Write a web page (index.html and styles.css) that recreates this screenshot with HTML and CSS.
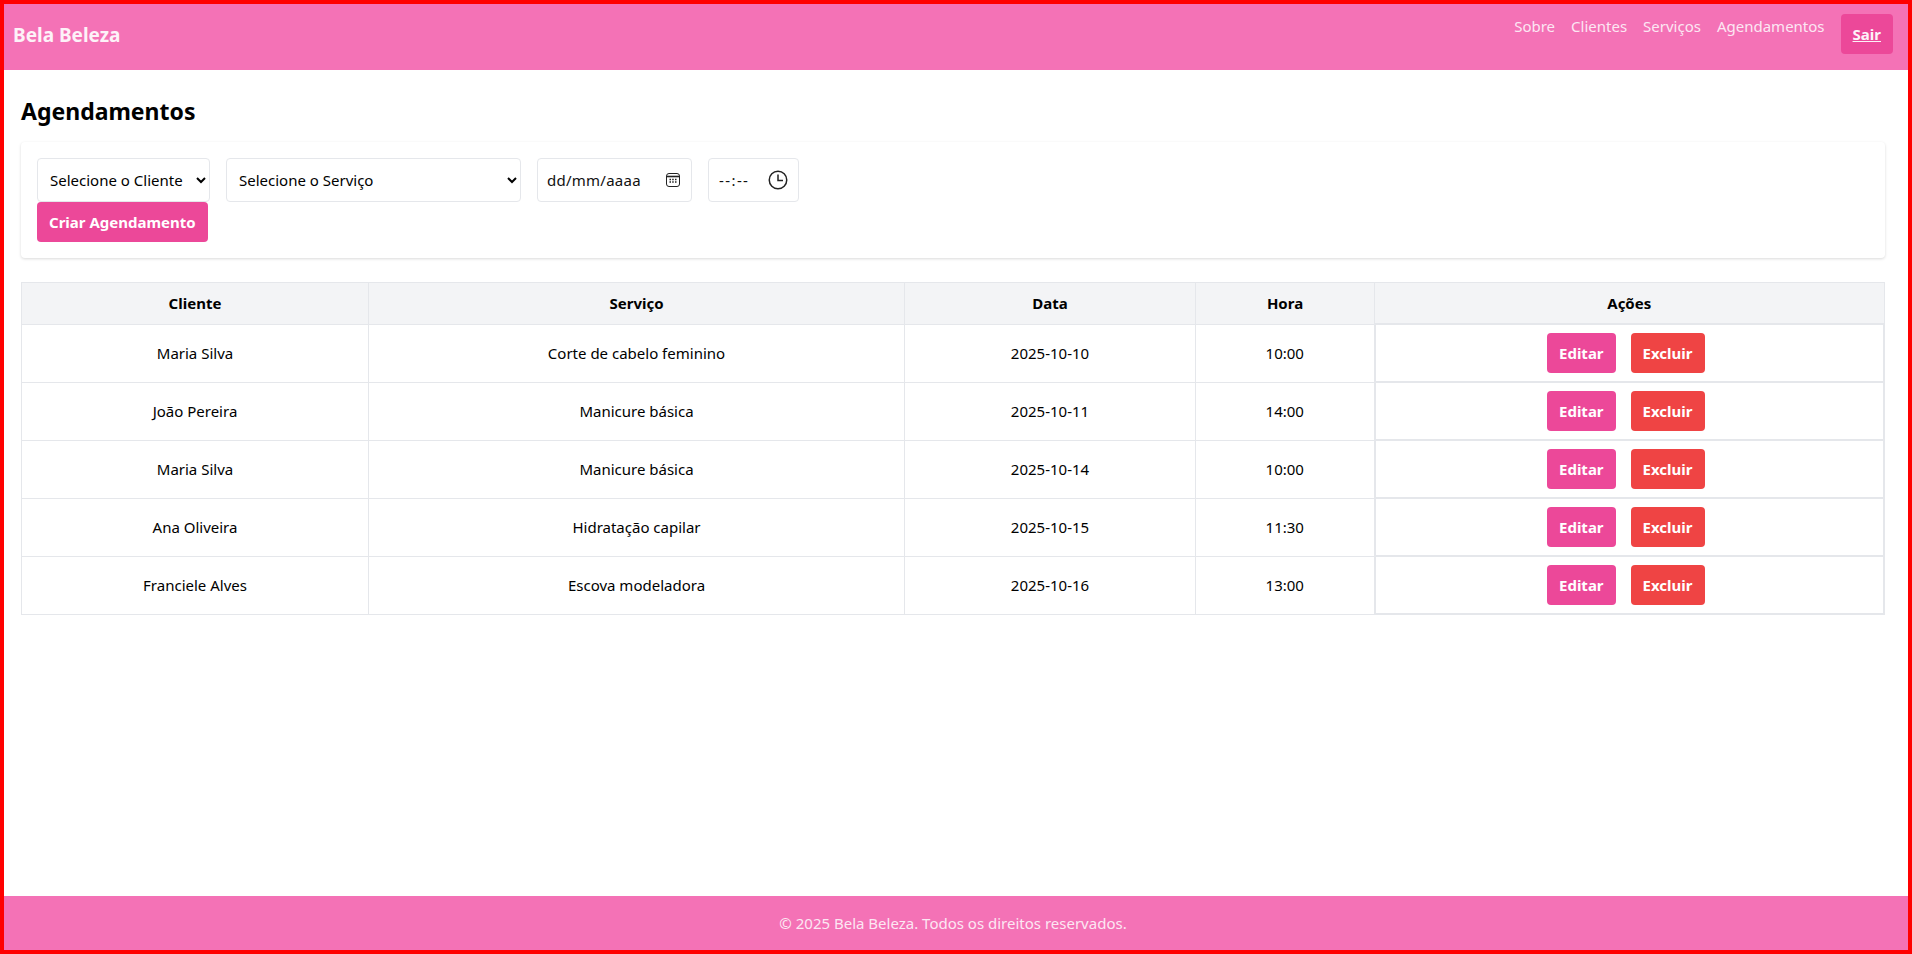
FILE: index.html
```html
<!DOCTYPE html>
<html lang="pt-BR">
<head>
  <meta charset="UTF-8" />
  <meta name="viewport" content="width=device-width, initial-scale=1.0"/>
  <title>Agendamentos - Bela Beleza</title>
  <link rel="stylesheet" href="styles.css">
</head>
<body>
  <header>
    <div class="brand">Bela Beleza</div>
    <nav>
      <a href="#">Sobre</a>
      <a href="#">Clientes</a>
      <a href="#">Serviços</a>
      <a href="#">Agendamentos</a>
      <a href="#" class="btn-sair">Sair</a>
    </nav>
  </header>

  <main>
    <h2>Agendamentos</h2>

    <form class="card">
      <div class="campos">
        <select class="sel-cliente">
          <option>Selecione o Cliente</option>
        </select>
        <select class="sel-servico">
          <option>Selecione o Serviço</option>
        </select>
        <label class="campo campo-data">
          <input type="text" placeholder="dd/mm/aaaa">
          <svg width="14" height="14" viewBox="0 0 14 14" fill="none" stroke="#222" stroke-width="1">
            <rect x="0.5" y="0.5" width="13" height="13" rx="2.5"/>
            <path d="M1 3.5h12" stroke-width="1.6"/>
            <path d="M3.5 6.5h1.5M6.2 6.5h1.5M9 6.5h1.5M3.5 9h1.5M6.2 9h1.5M9 9h1.5" stroke-width="1.3"/>
          </svg>
        </label>
        <label class="campo campo-hora">
          <input type="text" placeholder="--:--">
          <svg width="20" height="20" viewBox="0 0 20 20" fill="none" stroke="#222" stroke-width="1.5">
            <circle cx="10" cy="10" r="8.75"/>
            <path d="M10 4.5V10.5H15"/>
          </svg>
        </label>
      </div>
      <button type="button" class="btn btn-rosa">Criar Agendamento</button>
    </form>

    <table>
      <colgroup>
        <col class="col-cliente">
        <col class="col-servico">
        <col class="col-data">
        <col class="col-hora">
        <col>
      </colgroup>
      <thead>
        <tr>
          <th>Cliente</th>
          <th>Serviço</th>
          <th>Data</th>
          <th>Hora</th>
          <th>Ações</th>
        </tr>
      </thead>
      <tbody>
        <tr>
          <td>Maria Silva</td>
          <td>Corte de cabelo feminino</td>
          <td>2025-10-10</td>
          <td>10:00</td>
          <td class="acoes"><div><button class="btn btn-rosa">Editar</button><button class="btn btn-vermelho">Excluir</button></div></td>
        </tr>
        <tr>
          <td>João Pereira</td>
          <td>Manicure básica</td>
          <td>2025-10-11</td>
          <td>14:00</td>
          <td class="acoes"><div><button class="btn btn-rosa">Editar</button><button class="btn btn-vermelho">Excluir</button></div></td>
        </tr>
        <tr>
          <td>Maria Silva</td>
          <td>Manicure básica</td>
          <td>2025-10-14</td>
          <td>10:00</td>
          <td class="acoes"><div><button class="btn btn-rosa">Editar</button><button class="btn btn-vermelho">Excluir</button></div></td>
        </tr>
        <tr>
          <td>Ana Oliveira</td>
          <td>Hidratação capilar</td>
          <td>2025-10-15</td>
          <td>11:30</td>
          <td class="acoes"><div><button class="btn btn-rosa">Editar</button><button class="btn btn-vermelho">Excluir</button></div></td>
        </tr>
        <tr>
          <td>Franciele Alves</td>
          <td>Escova modeladora</td>
          <td>2025-10-16</td>
          <td>13:00</td>
          <td class="acoes"><div><button class="btn btn-rosa">Editar</button><button class="btn btn-vermelho">Excluir</button></div></td>
        </tr>
      </tbody>
    </table>
  </main>

  <footer>
    &copy; 2025 Bela Beleza. Todos os direitos reservados.
  </footer>
</body>
</html>
```

FILE: styles.css
```css
:root {
  --rosa-claro: #f472b6;
  --rosa: #ec4899;
  --vermelho: #ef4444;
  --borda: #e5e7eb;
  --cabecalho: #f3f4f6;
}

* {
  box-sizing: border-box;
}

html, body {
  height: 100%;
}

body {
  margin: 0;
  height: 954px;
  border: 4px solid #ff0000;
  display: flex;
  flex-direction: column;
  font-family: 'Noto Sans', sans-serif;
  font-size: 15px;
  line-height: 24px;
  color: #000;
  background-color: white;
  overflow: hidden;
}

header {
  background-color: var(--rosa-claro);
  height: 66px;
  padding: 10px 15px 0 9px;
  display: flex;
  justify-content: space-between;
  align-items: flex-start;
}

.brand {
  margin-top: 7px;
  font-size: 19px;
  line-height: 28px;
  font-weight: bold;
  color: #fdf2f8;
}

nav {
  display: flex;
  align-items: flex-start;
  gap: 16px;
}

nav a {
  color: #fce7f3;
  text-decoration: none;
}

nav a.btn-sair {
  padding: 8px 12px;
  background-color: var(--rosa);
  border-radius: 4px;
  color: #fdf2f8;
  font-weight: bold;
  text-decoration: underline;
}

main {
  flex: 1;
  padding: 25px 23px 0 17px;
}

h2 {
  margin: 0 0 15px;
  font-size: 23px;
  line-height: 32px;
  font-weight: bold;
}

.card {
  padding: 16px;
  margin-bottom: 24px;
  background-color: white;
  border-radius: 4px;
  box-shadow: 0 1px 3px rgba(0, 0, 0, 0.15);
}

.campos {
  display: flex;
  gap: 16px;
}

select, .campo {
  height: 44px;
  background-color: white;
  border: 1px solid var(--borda);
  border-radius: 4px;
  font-family: inherit;
  font-size: 15px;
  color: #000;
}

select {
  padding: 0 0 0 8px;
}

.sel-cliente {
  width: 173px;
}

.sel-servico {
  width: 295px;
}

.campo {
  display: flex;
  align-items: center;
  justify-content: space-between;
}

.campo svg {
  flex-shrink: 0;
}

.campo input {
  width: 100%;
  min-width: 0;
  border: none;
  outline: none;
  padding: 0;
  font-family: inherit;
  font-size: 15px;
  background: none;
}

.campo input::placeholder {
  color: #111;
  opacity: 1;
}

.campo-data {
  width: 155px;
  padding: 0 11px 0 9px;
}

.campo-data input {
  letter-spacing: 0.25px;
}

.campo-hora {
  width: 91px;
  padding: 0 10px;
}

.campo-hora input {
  letter-spacing: 1.4px;
}

.btn {
  border: none;
  border-radius: 4px;
  padding: 8px 12px;
  color: white;
  font-family: inherit;
  font-size: 15px;
  line-height: 24px;
  font-weight: bold;
  cursor: pointer;
}

.btn-rosa {
  background-color: var(--rosa);
}

.btn-vermelho {
  background-color: var(--vermelho);
}

table {
  width: 100%;
  border-collapse: collapse;
  table-layout: fixed;
}

.col-cliente { width: 347px; }
.col-servico { width: 536px; }
.col-data { width: 291px; }
.col-hora { width: 179px; }

th, td {
  border: 1px solid var(--borda);
  padding: 8px;
  text-align: center;
}

th {
  background-color: var(--cabecalho);
  font-weight: bold;
}

td.acoes {
  border-width: 2px;
}

.acoes div {
  display: flex;
  justify-content: center;
  gap: 15px;
  padding-right: 7px;
}

footer {
  background-color: var(--rosa-claro);
  color: #fce7f3;
  height: 54px;
  padding: 15px 6px 0 0;
  text-align: center;
}
```
